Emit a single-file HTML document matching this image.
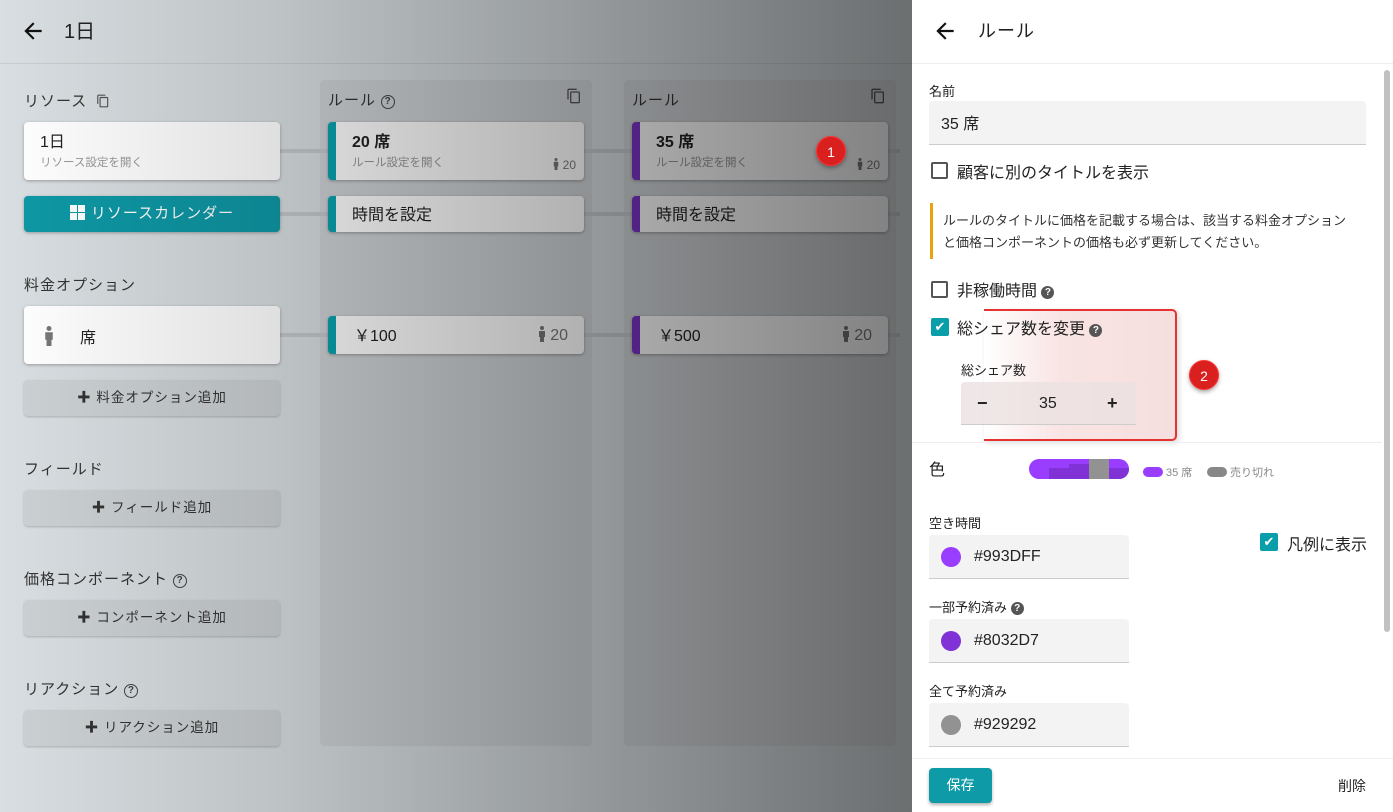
<!DOCTYPE html>
<html><head><meta charset="utf-8"><style>
*{box-sizing:border-box;margin:0;padding:0}
body{width:1393px;height:812px;overflow:hidden;position:relative;font-family:"Liberation Sans","Noto Sans CJK JP",sans-serif;color:#222;background:#d8dee1}
.abs{position:absolute}
.card{position:absolute;background:#fff;border-radius:4px;box-shadow:0 1px 3px rgba(0,0,0,.3)}
.col{position:absolute;background:#cfd3d6;border-radius:4px;top:80px;height:666px;width:272px}
.bar{border-left:8px solid #0aa3b0}
.pur{border-left:8px solid #7b35c9}
.line{position:absolute;height:4px;background:#c4c8cb}
.sec{position:absolute;font-size:15px;letter-spacing:1px;color:#333;line-height:20px}
.btn{position:absolute;left:24px;width:256px;height:36px;background:#ccd1d4;border-radius:4px;box-shadow:0 1px 2px rgba(0,0,0,.2);font-size:13.5px;text-align:center;line-height:36px;letter-spacing:1px;color:#333}
.t16{font-size:16px;line-height:20px}
.sub{font-size:11.5px;color:#999;line-height:16px}
.cnt{position:absolute;right:8px;font-size:12px;color:#777}
.overlay{position:absolute;left:0;top:0;width:912px;height:812px;background:linear-gradient(to right,rgba(0,0,0,0.0),rgba(0,0,0,0.12) 30%,rgba(0,0,0,0.5));pointer-events:none}
.panel{position:absolute;left:912px;top:0;width:481px;height:812px;background:#fff}
.lbl{position:absolute;font-size:13px;color:#222;line-height:16px}
.inp{position:absolute;background:#f3f3f3;border-bottom:1px solid #ccc;border-radius:4px 4px 0 0}
.cb{position:absolute;width:17px;height:17px;border:2px solid #555;border-radius:2px}
.cbc{position:absolute;width:18px;height:18px;background:#0a9daa;border-radius:2px;color:#fff;font-size:13px;line-height:18px;text-align:center}
.dot{position:absolute;width:20px;height:20px;border-radius:50%;left:12px;top:12px}
.q{display:inline-block;width:13px;height:13px;border-radius:50%;background:#555;color:#fff;font-size:10px;line-height:13px;text-align:center;font-weight:bold;vertical-align:1px}
.qo{display:inline-block;width:14px;height:14px;border-radius:50%;border:1.5px solid #444;color:#444;font-size:10px;line-height:11px;text-align:center;font-weight:bold;vertical-align:1px}
.badge{position:absolute;width:30px;height:30px;border-radius:50%;background:#d9201f;color:#fff;text-align:center;line-height:30px;font-size:14px;box-shadow:0 2px 4px rgba(0,0,0,.35);border:1px solid #f33}
.t{position:absolute;line-height:20px}
</style></head><body>
<svg style="display:none"><symbol id="p" viewBox="0 0 8 16"><circle cx="4" cy="2" r="2" fill="currentColor"/><path d="M1 5h6v6H6v5H2v-5H1z" fill="currentColor"/></symbol></svg>
<svg class="abs" style="left:20px;top:18px" width="26" height="26" viewBox="0 0 24 24"><path d="M20 11H7.83l5.59-5.59L12 4l-8 8 8 8 1.41-1.41L7.83 13H20v-2z" fill="#111"/></svg>
<div class="t" style="left:64px;top:20px;font-size:20px;line-height:24px">1日</div>
<div class="abs" style="left:0;top:63px;width:912px;height:1px;background:#c8cdd0"></div>

<div class="col" style="left:320px"></div>
<div class="col" style="left:624px"></div>
<div class="line" style="left:280px;top:149px;width:620px"></div>
<div class="line" style="left:280px;top:212px;width:620px"></div>
<div class="line" style="left:280px;top:333px;width:620px"></div>

<div class="sec" style="left:24px;top:92px">リソース <svg width="14" height="14" viewBox="0 0 24 24" style="vertical-align:-2px;margin-left:4px"><path d="M16 1H4c-1.1 0-2 .9-2 2v14h2V3h12V1zm3 4H8c-1.1 0-2 .9-2 2v14c0 1.1.9 2 2 2h11c1.1 0 2-.9 2-2V7c0-1.1-.9-2-2-2zm0 16H8V7h11v14z" fill="#555"/></svg></div>
<div class="sec" style="left:328px;top:91px">ルール <span class="qo">?</span></div>
<div class="sec" style="left:632px;top:91px">ルール</div>
<svg class="abs" style="left:566px;top:88px" width="16" height="16" viewBox="0 0 24 24"><path d="M16 1H4c-1.1 0-2 .9-2 2v14h2V3h12V1zm3 4H8c-1.1 0-2 .9-2 2v14c0 1.1.9 2 2 2h11c1.1 0 2-.9 2-2V7c0-1.1-.9-2-2-2zm0 16H8V7h11v14z" fill="#555"/></svg>
<svg class="abs" style="left:870px;top:88px" width="16" height="16" viewBox="0 0 24 24"><path d="M16 1H4c-1.1 0-2 .9-2 2v14h2V3h12V1zm3 4H8c-1.1 0-2 .9-2 2v14c0 1.1.9 2 2 2h11c1.1 0 2-.9 2-2V7c0-1.1-.9-2-2-2zm0 16H8V7h11v14z" fill="#555"/></svg>

<div class="card" style="left:24px;top:122px;width:256px;height:58px;padding:11px 16px"><div class="t16">1日</div><div class="sub" style="margin-top:2px">リソース設定を開く</div></div>
<div class="card" style="left:24px;top:196px;width:256px;height:36px;background:#0e98a5;color:#fff;text-align:center;line-height:36px;font-size:15px;letter-spacing:1px"><span style="display:inline-block;width:15px;height:15px;vertical-align:-2px;margin-right:6px;background:linear-gradient(#fff,#fff) 0 0/7px 7px no-repeat,linear-gradient(#fff,#fff) 8px 0/7px 7px no-repeat,linear-gradient(#fff,#fff) 0 8px/7px 7px no-repeat,linear-gradient(#fff,#fff) 8px 8px/7px 7px no-repeat"></span>リソースカレンダー</div>

<div class="card bar" style="left:328px;top:122px;width:256px;height:58px;padding:11px 16px"><div class="t16" style="font-weight:bold">20 席</div><div class="sub" style="margin-top:2px">ルール設定を開く</div><div class="cnt" style="top:36px"><svg width="6" height="12" style="color:#777;vertical-align:-1px"><use href="#p"/></svg> 20</div></div>
<div class="card bar" style="left:328px;top:196px;width:256px;height:36px;padding:10px 16px;font-size:16px;line-height:20px">時間を設定</div>
<div class="card bar" style="left:328px;top:316px;width:256px;height:38px;padding:11px 18px;font-size:16px;line-height:20px">￥100<span class="cnt" style="top:10px;right:16px;font-size:16px;line-height:20px"><svg width="8" height="16" style="color:#777;vertical-align:-2px"><use href="#p"/></svg> 20</span></div>

<div class="card pur" style="left:632px;top:122px;width:256px;height:58px;padding:11px 16px"><div class="t16" style="font-weight:bold">35 席</div><div class="sub" style="margin-top:2px">ルール設定を開く</div><div class="cnt" style="top:36px"><svg width="6" height="12" style="color:#777;vertical-align:-1px"><use href="#p"/></svg> 20</div></div>
<div class="card pur" style="left:632px;top:196px;width:256px;height:36px;padding:10px 16px;font-size:16px;line-height:20px">時間を設定</div>
<div class="card pur" style="left:632px;top:316px;width:256px;height:38px;padding:11px 18px;font-size:16px;line-height:20px">￥500<span class="cnt" style="top:10px;right:16px;font-size:16px;line-height:20px"><svg width="8" height="16" style="color:#777;vertical-align:-2px"><use href="#p"/></svg> 20</span></div>

<div class="sec" style="left:24px;top:276px">料金オプション</div>
<div class="card" style="left:24px;top:306px;width:256px;height:58px;padding:20px 20px;font-size:16px;line-height:20px"><svg width="10" height="20" style="color:#777;vertical-align:-3px"><use href="#p"/></svg><span style="margin-left:26px">席</span></div>
<div class="btn" style="top:380px"><b>✚</b> 料金オプション追加</div>
<div class="sec" style="left:24px;top:460px">フィールド</div>
<div class="btn" style="top:490px"><b>✚</b> フィールド追加</div>
<div class="sec" style="left:24px;top:570px">価格コンポーネント <span class="qo">?</span></div>
<div class="btn" style="top:600px"><b>✚</b> コンポーネント追加</div>
<div class="sec" style="left:24px;top:680px">リアクション <span class="qo">?</span></div>
<div class="btn" style="top:710px"><b>✚</b> リアクション追加</div>

<div class="overlay"></div>
<div class="badge" style="left:816px;top:136px">1</div>

<div class="panel">
<svg class="abs" style="left:20px;top:18px" width="26" height="26" viewBox="0 0 24 24"><path d="M20 11H7.83l5.59-5.59L12 4l-8 8 8 8 1.41-1.41L7.83 13H20v-2z" fill="#111"/></svg>
<div class="t" style="left:66px;top:21px;font-size:18px;letter-spacing:1px">ルール</div>
<div class="abs" style="left:0;top:63px;width:481px;height:1px;background:#eee"></div>
<div class="abs" style="left:472px;top:70px;width:6px;height:562px;background:#c1c1c1;border-radius:3px"></div>

<div class="lbl" style="left:17px;top:84px">名前</div>
<div class="inp" style="left:17px;top:101px;width:437px;height:44px;padding:14px 12px;font-size:16px;line-height:20px">35 席</div>
<div class="cb" style="left:19px;top:162px"></div>
<div class="t" style="left:45px;top:164px;font-size:16px">顧客に別のタイトルを表示</div>
<div class="abs" style="left:18px;top:203px;width:436px;height:56px;border-left:3px solid #e8a40c;padding:7px 10px;font-size:13px;line-height:22px;color:#333">ルールのタイトルに価格を記載する場合は、該当する料金オプションと価格コンポーネントの価格も必ず更新してください。</div>
<div class="cb" style="left:19px;top:281px"></div>
<div class="t" style="left:45px;top:282px;font-size:16px">非稼働時間 <span class="q">?</span></div>

<div class="abs" style="left:72px;top:309px;width:193px;height:132px;border:2px solid #e53232;border-left:none;border-radius:0 5px 5px 0;background:linear-gradient(to right,rgba(255,255,255,0),rgba(245,210,210,.6) 40%,rgba(240,200,200,.6));box-shadow:2px 2px 6px rgba(0,0,0,.15)"></div>
<div class="cbc" style="left:19px;top:318px">✔</div>
<div class="t" style="left:45px;top:320px;font-size:16px">総シェア数を変更 <span class="q">?</span></div>
<div class="lbl" style="left:49px;top:363px">総シェア数</div>
<div class="inp" style="left:49px;top:382px;width:175px;height:43px;background:rgba(235,225,225,.8);font-size:16px"><b class="abs" style="left:16px;top:10px;font-size:18px;line-height:22px">−</b><span class="abs" style="left:78px;top:12px;line-height:20px">35</span><b class="abs" style="left:146px;top:10px;font-size:18px;line-height:22px">+</b></div>
<div class="badge" style="left:277px;top:360px">2</div>
<div class="abs" style="left:0;top:442px;width:470px;height:1px;background:#eee"></div>

<div class="t" style="left:17px;top:461px;font-size:16px">色</div>
<div class="abs" style="left:117px;top:459px;width:100px;height:20px;border-radius:10px;overflow:hidden;background:#993dff"><div class="abs" style="left:20px;top:9px;width:20px;height:11px;background:#8032d7"></div><div class="abs" style="left:40px;top:5px;width:20px;height:15px;background:#8032d7"></div><div class="abs" style="left:60px;top:0;width:20px;height:20px;background:#929292"></div><div class="abs" style="left:80px;top:9px;width:20px;height:11px;background:#8032d7"></div></div>
<div class="abs" style="left:231px;top:467px;width:20px;height:10px;border-radius:5px;background:#993dff"></div>
<div class="abs" style="left:254px;top:466px;font-size:11px;color:#888;line-height:14px">35 席</div>
<div class="abs" style="left:295px;top:467px;width:20px;height:10px;border-radius:5px;background:#888"></div>
<div class="abs" style="left:318px;top:466px;font-size:11px;color:#888;line-height:14px">売り切れ</div>

<div class="lbl" style="left:17px;top:516px">空き時間</div>
<div class="inp" style="left:17px;top:535px;width:200px;height:44px"><div class="dot" style="background:#993dff"></div><span class="abs" style="left:45px;top:12px;font-size:16px;line-height:20px">#993DFF</span></div>
<div class="cbc" style="left:348px;top:533px">✔</div>
<div class="t" style="left:375px;top:536px;font-size:16px">凡例に表示</div>
<div class="lbl" style="left:17px;top:600px">一部予約済み <span class="q">?</span></div>
<div class="inp" style="left:17px;top:619px;width:200px;height:44px"><div class="dot" style="background:#8032d7"></div><span class="abs" style="left:45px;top:12px;font-size:16px;line-height:20px">#8032D7</span></div>
<div class="lbl" style="left:17px;top:684px">全て予約済み</div>
<div class="inp" style="left:17px;top:703px;width:200px;height:44px"><div class="dot" style="background:#929292"></div><span class="abs" style="left:45px;top:12px;font-size:16px;line-height:20px">#929292</span></div>

<div class="abs" style="left:0;top:758px;width:481px;height:54px;background:#fff;border-top:1px solid #eee"></div>
<div class="abs" style="left:17px;top:768px;width:63px;height:35px;background:#0e9aa7;border-radius:4px;color:#fff;text-align:center;line-height:35px;font-size:14px;box-shadow:0 2px 3px rgba(0,0,0,.3)">保存</div>
<div class="abs" style="left:426px;top:776px;font-size:14px;line-height:20px">削除</div>
</div>
</body></html>
